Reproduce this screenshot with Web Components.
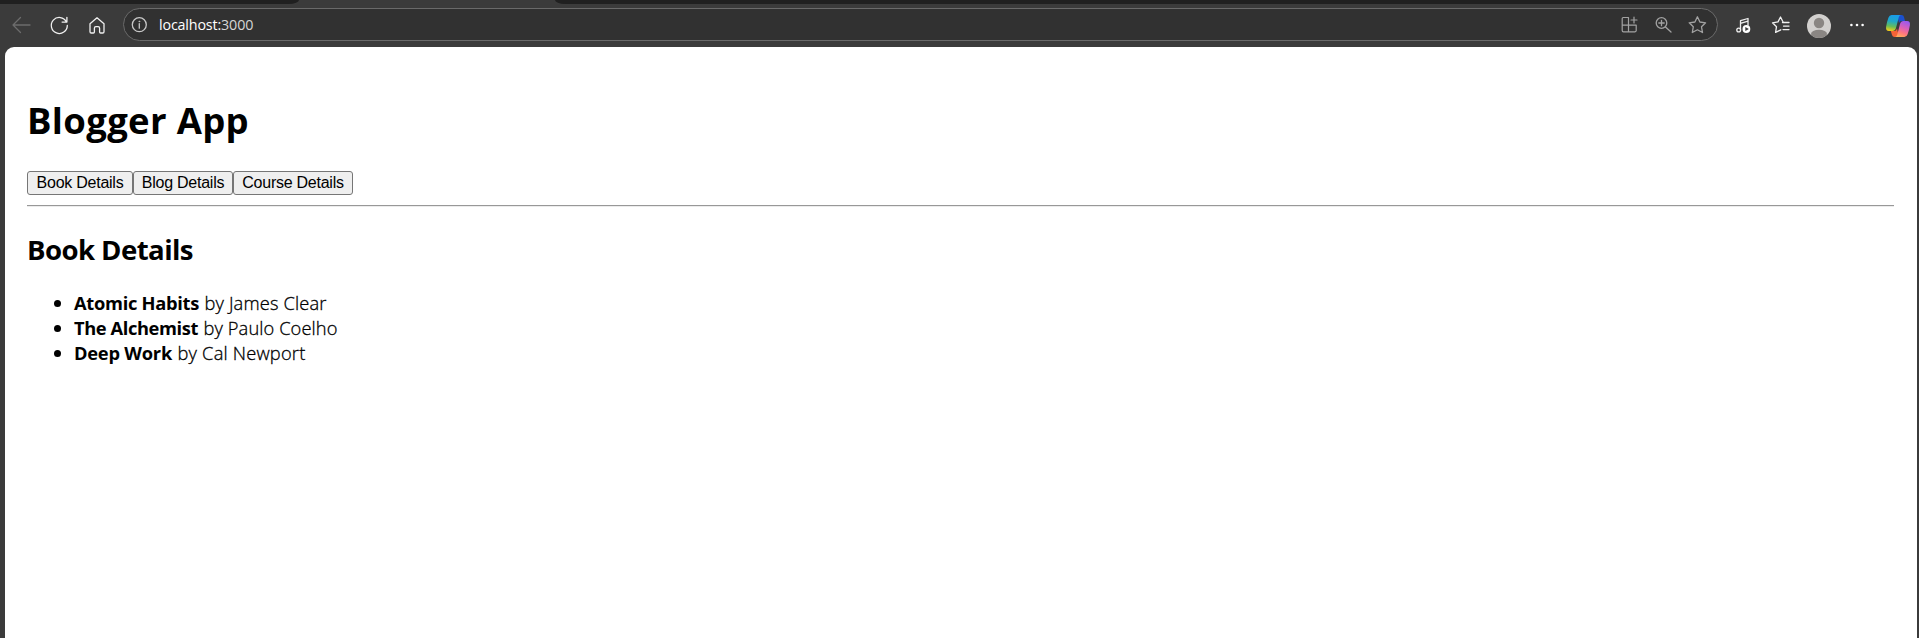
<!DOCTYPE html>
<html lang="en">
<head>
<meta charset="utf-8">
<title>Blogger App</title>
<style>
html,body{margin:0;height:100%;overflow:hidden;background:#3b3b3b}
body{font-family:"Open Sans","Noto Sans",sans-serif}
</style>
</head>
<body>
<browser-window>
  <browser-toolbar slot="toolbar"></browser-toolbar>
  <blogger-app></blogger-app>
</browser-window>
<script>
const define = (name, html, ready) => customElements.define(name, class extends HTMLElement {
  constructor() {
    super();
    this.attachShadow({ mode: 'open' }).innerHTML = html;
  }
  connectedCallback() { if (ready) ready(this); }
});

/* Text tracked so that it takes up the width (px) given in the "w" attribute. */
define('fit-text', `<style>:host{display:inline-block;white-space:pre}span{display:inline-block}</style><span><slot></slot></span>`, el => {
  const span = el.shadowRoot.querySelector('span');
  const n = el.textContent.length;
  const extra = +el.getAttribute('w') - span.getBoundingClientRect().width;
  span.style.letterSpacing = (extra / n) + 'px';
});

const icons = {
  back: `<g stroke="#6c6c6c"><path d="M6 14H23M13.5 6.5L6 14L13.5 21.5"/></g>`,
  reload: `<path d="M21.4 10.8A8 8 0 1 0 22.3 14.5M21.9 6.3V11.1H17.1"/>`,
  home: `<path d="M7 12.7L14 6.8L21 12.7V20.7Q21 22 19.7 22H17.6Q16.6 22 16.6 21V17.2Q16.6 15.7 15.1 15.7H12.9Q11.4 15.7 11.4 17.2V21Q11.4 22 10.4 22H8.3Q7 22 7 20.7Z"/>`,
  info: `<g stroke="#c8c8c8"><circle cx="14.3" cy="13.7" r="7"/><path d="M14.3 12.7V17.2"/><circle cx="14.3" cy="10.4" r=".5" fill="#c8c8c8" stroke-width=".6"/></g>`,
  apps: `<g stroke="#a2a2a2" stroke-width="1.2"><path d="M13.5 6.5H8.2Q7.2 6.5 7.2 7.5V19.5Q7.2 20.8 8.5 20.8H20Q21.2 20.8 21.2 19.6V14.2H7.2M13.5 6.5V20.8M19 6V12M16 9H22"/></g>`,
  zoom: `<g stroke="#a2a2a2"><circle cx="12.5" cy="12" r="5.3"/><path d="M16.5 16L22 21M12.5 9.3V14.7M9.8 12H15.2"/></g>`,
  star: `<g stroke="#a2a2a2"><path d="M14.4 5.8L16.9 11L22.6 11.8L18.5 15.8L19.5 21.5L14.4 18.8L9.3 21.5L10.3 15.8L6.2 11.8L11.9 11Z"/></g>`,
  music: `<path d="M11.5 19V9.7L19 7.5V14M11.5 12.3L19 10.1" /><circle cx="9.7" cy="19" r="1.9"/><circle cx="17.4" cy="18" r="3.9" fill="#fff" stroke="none"/><path d="M16.3 15.9L19.9 18L16.3 20.1Z" fill="#3b3b3b" stroke="none"/>`,
  favorites: `<path d="M16.2 11.2L13.5 6L11 10.9L5.5 11.8L9.5 15.7L8.6 21.4L13.8 18.8M15.5 11.5H22M16.5 15.1H22M16 18.6H22"/>`,
  avatar: `<g stroke="none"><clipPath id="c"><circle cx="14" cy="15" r="12"/></clipPath><circle cx="14" cy="15" r="12" fill="#d2d0ce"/><g clip-path="url(#c)" fill="#8a8683"><circle cx="14" cy="12" r="5.2"/><ellipse cx="14" cy="23" rx="8" ry="4.2"/></g></g>`,
  more: `<g fill="#fff" stroke="none"><circle cx="8.4" cy="14" r="1.3"/><circle cx="14" cy="14" r="1.3"/><circle cx="19.6" cy="14" r="1.3"/></g>`,
  copilot: `<defs><linearGradient id="l" x1=".5" y1="0" x2=".35" y2="1"><stop stop-color="#199bea"/><stop offset=".4" stop-color="#21a9c5"/><stop offset=".72" stop-color="#67bd59"/><stop offset="1" stop-color="#f5ce18"/></linearGradient><linearGradient id="r" x1=".65" y1="0" x2=".3" y2="1"><stop stop-color="#9b59ed"/><stop offset=".42" stop-color="#dc61b7"/><stop offset=".72" stop-color="#ff777e"/><stop offset="1" stop-color="#ffad57"/></linearGradient></defs><g stroke="none"><path d="M13 4H17.7Q19.5 4 20 6L21 10H17.5Q15.8 10 15 12Z" fill="#1b50cd"/><path d="M15 26H10.5Q8.6 26 8 24L6.8 20H10.5Q12.2 20 13 17.5Z" fill="#f46336"/><path d="M7.6 4H16.8Q15.3 4.3 14.7 6.5L12 17Q11.2 20 8.5 20H5Q1.5 20 2.1 15.8Q2.8 11.2 4.4 6.8Q5.4 4 7.6 4Z" fill="url(#l)"/><path d="M20.4 26H11.2Q12.7 25.7 13.3 23.5L16 13Q16.8 10 19.5 10H23Q26.5 10 25.9 14.2Q25.2 18.8 23.6 23.2Q22.6 26 20.4 26Z" fill="url(#r)"/></g>`
};
define('tool-icon', `<style>:host{display:block;flex:none;width:28px;height:28px}svg{display:block;overflow:visible}</style><svg width="28" height="28" viewBox="0 0 28 28" fill="none" stroke="#f0f0f0" stroke-width="1.3" stroke-linecap="round" stroke-linejoin="round"></svg>`, el => {
  el.shadowRoot.querySelector('svg').innerHTML = icons[el.getAttribute('name')];
});

define('address-bar', `<style>
:host{display:flex;box-sizing:border-box;flex:1;height:33px;border:1px solid #6a6a6a;border-radius:17px;background:#313131;padding:2px 5.5px 0 1px;color:#fff;font-size:14.3px;line-height:27px}
fit-text{margin-left:6px}
.grow{flex:1}.gap{margin-left:6px}.num{color:#d5d5d5}
</style><tool-icon name="info"></tool-icon><fit-text w="62">localhost:</fit-text><fit-text class="num" style="margin-left:0" w="32.5">3000</fit-text><span class="grow"></span><tool-icon name="apps"></tool-icon><tool-icon class="gap" name="zoom"></tool-icon><tool-icon class="gap" name="star"></tool-icon>`);

define('browser-toolbar', `<style>
:host{display:block;height:47px}
.tabs{display:flex;height:4px;background:#3b3b3b}
.tabs i{background:#202020}
.left{width:299px;border-bottom-right-radius:10px 4px}
.mid{width:256px}
.right{flex:1;border-bottom-left-radius:10px 4px}
.row{display:flex;align-items:flex-start;box-sizing:border-box;height:43px;padding:4px 7px 0}
.row>tool-icon{margin-top:3px;margin-right:10px}
.row>.home{margin-right:12px}
address-bar{margin-right:11.5px}
.row>.more{margin-right:13px}
.row>.last{margin-right:0}
</style>
<div class="tabs"><i class="left"></i><span class="mid"></span><i class="right"></i></div>
<div class="row"><tool-icon name="back"></tool-icon><tool-icon name="reload"></tool-icon><tool-icon class="home" name="home"></tool-icon><address-bar></address-bar><tool-icon name="music"></tool-icon><tool-icon name="favorites"></tool-icon><tool-icon name="avatar"></tool-icon><tool-icon class="more" name="more"></tool-icon><tool-icon class="last" name="copilot"></tool-icon></div>`);

define('browser-window', `<style>
:host{display:flex;flex-direction:column;height:100vh;background:#3b3b3b}
main{flex:1;margin:0 2px 0 5px;border-radius:9px 9px 0 0;background:#fff;overflow:hidden}
</style><slot name="toolbar"></slot><main><slot></slot></main>`);

define('tab-button', `<style>
:host{display:block}
button{display:block;box-sizing:border-box;width:100%;height:24px;padding:0 0 1px;border:1px solid #767676;border-radius:3px;background:#efefef;color:#000;font:16px/20px "Liberation Sans",Arial,sans-serif;letter-spacing:-.25px}
</style><button><slot></slot></button>`);

define('book-item', `<style>
:host{display:flex;align-items:center;height:25px;line-height:25px;white-space:pre}
i{width:7px;height:7px;border-radius:50%;background:#000;margin:1px 13px 0 0}
</style><i></i><slot></slot>`);

define('blogger-app', `<style>
:host{display:block;padding:48px 23px 0 22px;color:#000;font-size:18.3px}
h1{margin:0;font-size:36.5px;line-height:50px;font-weight:700}
nav{display:flex;margin-top:26px}
hr{margin:10px 0 0;border:0;height:1px;background:#989898;border-bottom:1px solid #ececec}
h2{margin:24px 0 0;font-size:27.6px;line-height:36px;font-weight:700}
section{padding:23px 0 0 27px}
b{font-weight:700}
fit-text{vertical-align:top}
.by{margin-left:5.5px;font-weight:300;-webkit-text-stroke:.3px #000}
</style>
<h1><fit-text w="222">Blogger App</fit-text></h1>
<nav><tab-button style="width:106px">Book Details</tab-button><tab-button style="width:100px">Blog Details</tab-button><tab-button style="width:120px">Course Details</tab-button></nav>
<hr>
<h2><fit-text w="166">Book Details</fit-text></h2>
<section>
<book-item><b><fit-text w="125">Atomic Habits</fit-text></b><fit-text class="by" w="122">by James Clear</fit-text></book-item>
<book-item><b><fit-text w="124">The Alchemist</fit-text></b><fit-text class="by" w="134">by Paulo Coelho</fit-text></book-item>
<book-item><b><fit-text w="98">Deep Work</fit-text></b><fit-text class="by" w="128">by Cal Newport</fit-text></book-item>
</section>`);
</script>
</body>
</html>
